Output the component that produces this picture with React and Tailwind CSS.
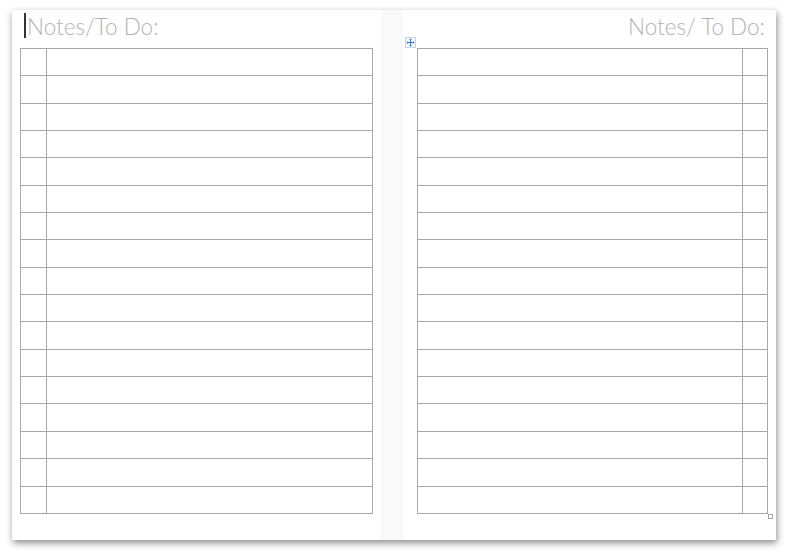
import React from 'react';

const ROWS = Array.from({ length: 17 }, (_, i) => i);

function MoveHandle() {
  return (
    <div className="w-[11px] h-[11px] border border-[#c9d3e0] bg-[#f4f7fb] flex items-center justify-center">
      <svg width="9" height="9" viewBox="0 0 9 9">
        <path d="M4.5 0.5 L6 2 H3 Z M4.5 8.5 L3 7 H6 Z M0.5 4.5 L2 3 V6 Z M8.5 4.5 L7 6 V3 Z" fill="#3a78c9" />
        <path d="M4.5 1.5 V7.5 M1.5 4.5 H7.5" stroke="#3a78c9" strokeWidth="1" />
      </svg>
    </div>
  );
}

function LinedTable({ side }) {
  return (
    <div className="border-t border-l border-[#a8a8a8]">
      {ROWS.map((r) => (
        <div key={r} className="flex h-[27.35px]">
          {side === 'left' && <div className="w-[26px] border-r border-b border-[#a8a8a8]" />}
          <div className="flex-1 border-r border-b border-[#a8a8a8]" />
          {side === 'right' && <div className="w-[25px] border-r border-b border-[#a8a8a8]" />}
        </div>
      ))}
    </div>
  );
}

export default function App() {
  return (
    <div className="w-[788px] h-[555px] bg-white overflow-hidden" style={{ fontFamily: 'Lato, "Open Sans", sans-serif' }}>
      <div className="ml-[12px] mt-[10px] w-[764px] h-[530px] bg-white flex shadow-[1px_3px_7px_rgba(0,0,0,0.45)]">
        {/* left page */}
        <div className="w-[369px] pl-[8px]">
          <div className="h-[38px] flex items-start pt-[3px]">
            <span className="w-[2px] h-[25px] bg-[#333] ml-[4px] mr-[1px]" />
            <span className="text-[22.5px] leading-[27px] font-light text-[#b3b3b3]">Notes/To Do:</span>
          </div>
          <div className="w-[353px]">
            <LinedTable side="left" />
          </div>
        </div>

        {/* gutter */}
        <div className="w-[22px] bg-[#f9f9f9]" />

        {/* right page */}
        <div className="flex-1 relative">
          <div className="h-[38px] flex justify-end pr-[11px] pt-[3px]">
            <span className="text-[22.5px] leading-[27px] font-light text-[#b3b3b3]">Notes/ To Do:</span>
          </div>
          <div className="flex items-start">
            <div className="w-[12px] -mt-[11px] ml-[2px]">
              <MoveHandle />
            </div>
            <div className="w-[351px] relative">
              <LinedTable side="right" />
              <div className="absolute right-[-5px] bottom-[-5px] w-[5px] h-[5px] border border-[#a8a8a8] bg-white" />
            </div>
          </div>
        </div>
      </div>
    </div>
  );
}
